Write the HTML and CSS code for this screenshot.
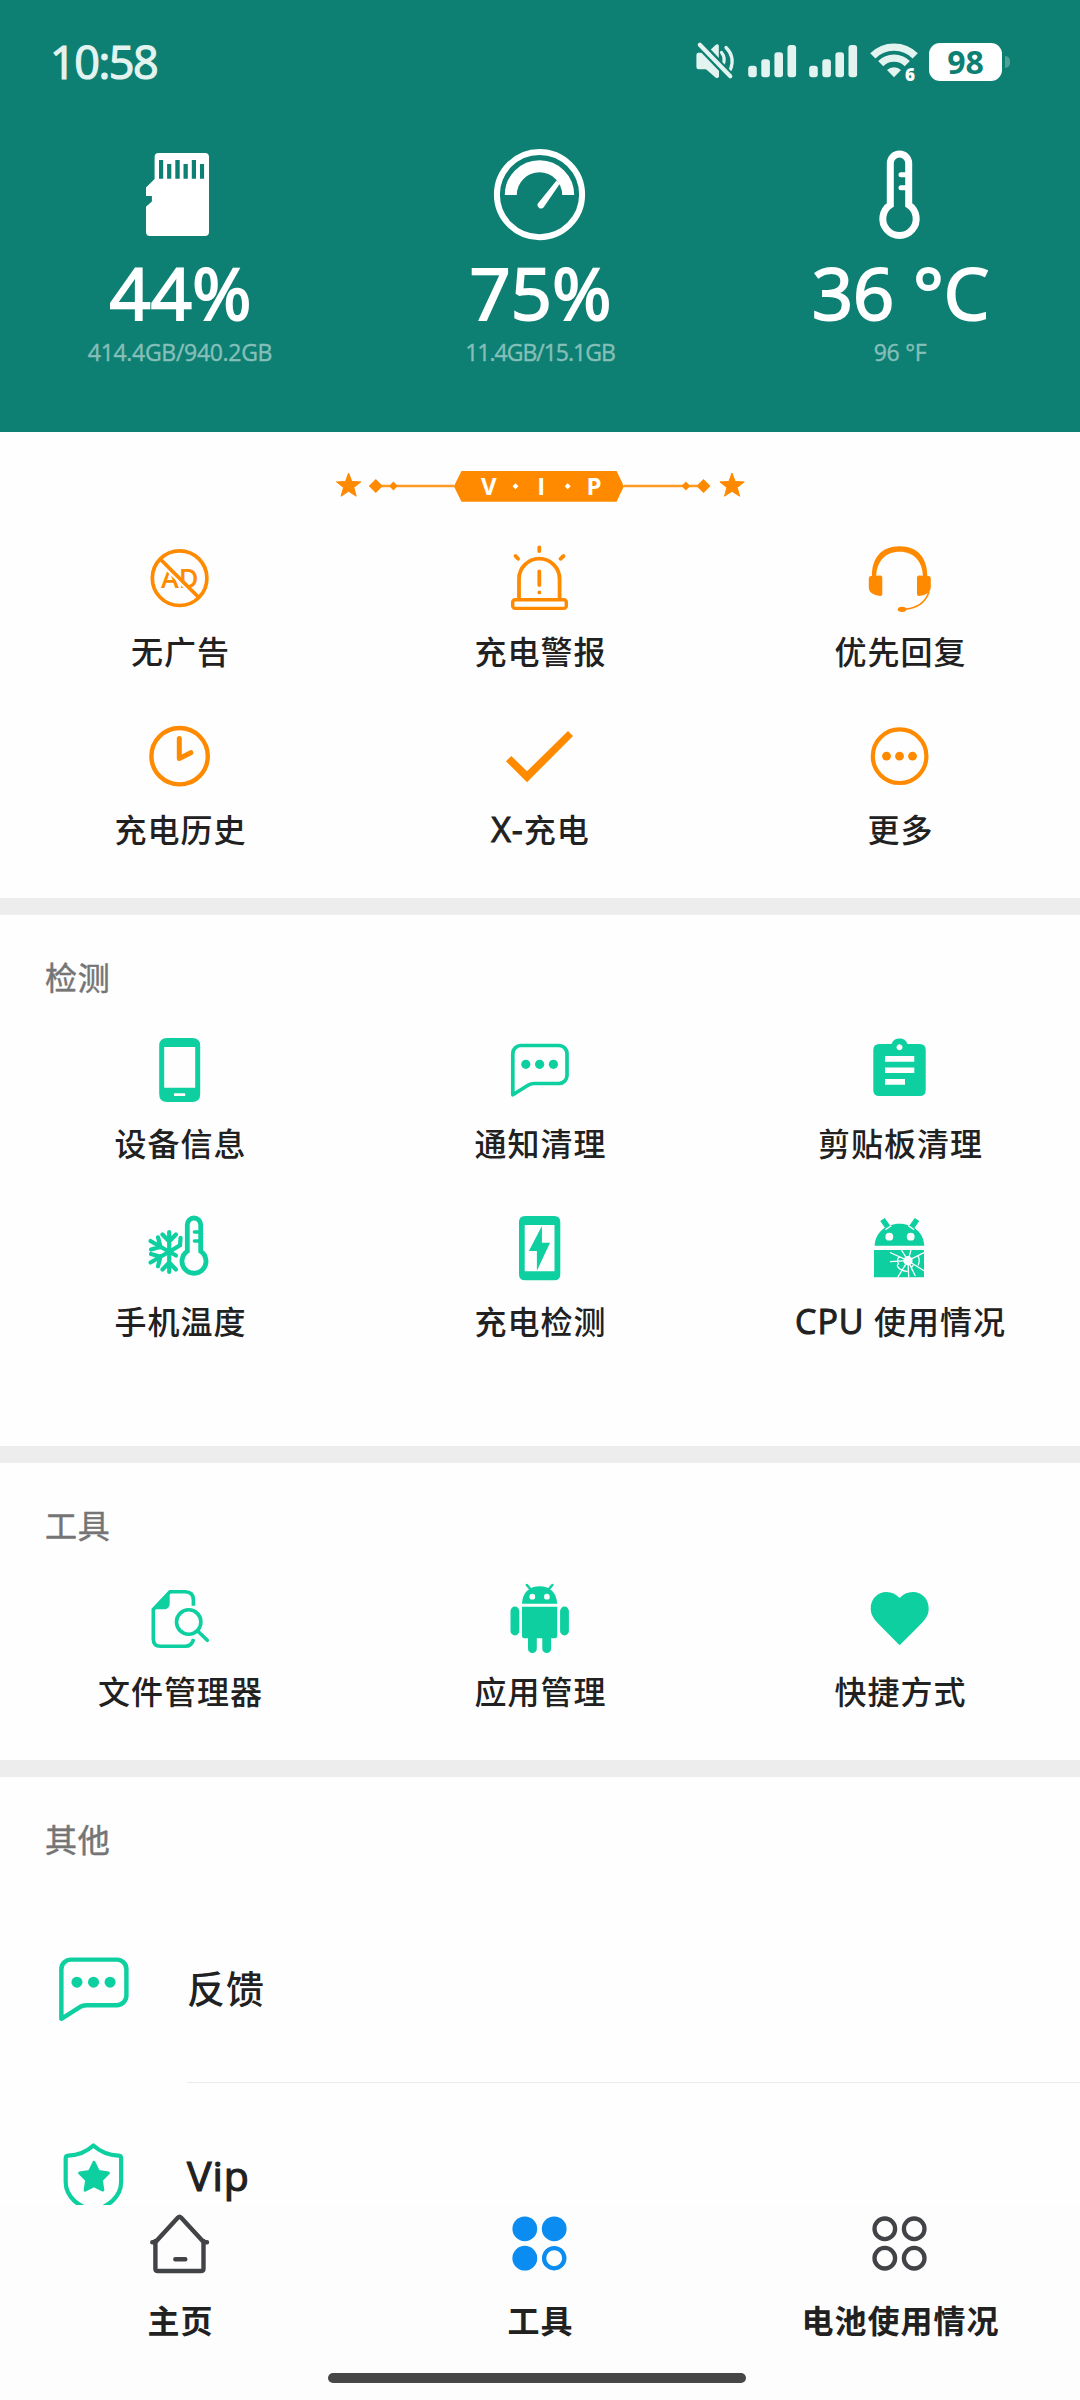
FILE: index.html
```html
<!DOCTYPE html>
<html lang="zh-CN">
<head>
<meta charset="utf-8">
<title>工具</title>
<link rel="stylesheet" href="styles.css">
</head>
<body>
<svg class="sprite" width="0" height="0">
  <symbol id="chat" viewBox="0 0 80 80">
    <path d="M12.800 64.800V23.500a8 8 0 0 1 8-8H59a8 8 0 0 1 8 8v22a8 8 0 0 1-8 8H34q-4 0-6.800 2.200z" fill="none" stroke="currentColor" stroke-width="3.700" stroke-linejoin="round"/>
    <circle cx="25.800" cy="34.300" r="4.600" fill="currentColor"/><circle cx="39.600" cy="34.300" r="4.600" fill="currentColor"/><circle cx="53.400" cy="34.300" r="4.600" fill="currentColor"/>
  </symbol>
  <symbol id="signal" viewBox="0 0 49 40">
    <rect x=".2" y="23.700" width="8.600" height="11.600" rx="3"/><rect x="13.300" y="17.300" width="8.600" height="18" rx="3"/><rect x="26.400" y="10.300" width="8.600" height="25" rx="3"/><rect x="39.500" y="3" width="8.600" height="32.300" rx="3"/>
  </symbol>
</svg>

<main class="content">
  <header class="header">
    <div class="status">
      <span class="time">10:58</span>
      <div class="status-icons">
        <svg width="40" height="40" viewBox="0 0 40 40" class="mute">
          <path d="M2.500 10.700H8L23 26v8.500q-1 2.500-3.500 1L10 27.300H2.500Q.4 27.300.4 25V13q0-2.300 2.100-2.300zM14.800 7.600l5-4.800q2.200-1.200 3 .7v12.400z"/>
          <path d="M25.500 10.500q4.500 5.500 1.500 12M30 5.500q9.500 9.500 4.500 22" fill="none" stroke="currentColor" stroke-width="3.200" stroke-linecap="round"/>
          <path d="M3.500 2.500L34.300 34.500" class="mute-gap"/>
          <path d="M3.800 2.700L34.300 34.300" fill="none" stroke="currentColor" stroke-width="4.200" stroke-linecap="round"/>
        </svg>
        <svg width="49" height="40"><use href="#signal"/></svg>
        <svg width="49" height="40"><use href="#signal"/></svg>
        <svg width="49" height="40" viewBox="0 0 49 40" class="wifi">
          <path d="M2.800 13.800a30 30 0 0 1 42.400 0M10.700 21.700a18.800 18.800 0 0 1 26.600 0" fill="none" stroke="currentColor" stroke-width="7.300"/>
          <path d="M24 35.300l-7-7.300a10 10 0 0 1 14 0z"/>
          <text x="35" y="38.700" class="wifi-gen">6</text>
        </svg>
        <div class="battery"><span class="battery-level">98</span></div>
        <i class="battery-nub"></i>
      </div>
    </div>
    <div class="stats">
      <div class="stat">
        <svg width="100" height="100" viewBox="0 0 100 100">
          <path fill-rule="evenodd" d="M28.600 8H75q4 0 4 4v75q0 4-4 4H20q-4 0-4-4V61.700L21.900 56.500V51H16V42.500L24.600 34V12q0-4 4-4zM29 15v18.700h4.200V15zM37.100 19v14.700h4.200V19zM45.300 15v18.700h4.400V15zM53.500 19v14.700h4.300V19zM61.800 15v18.700H66V15zM70 19v14.700h4.100V19z"/>
        </svg>
        <strong class="stat-value">44%</strong><span class="stat-detail">414.4GB/940.2GB</span>
      </div>
      <div class="stat">
        <svg width="100" height="100" viewBox="0 0 100 100">
          <circle cx="49.500" cy="49.600" r="42.600" fill="none" stroke="currentColor" stroke-width="6"/>
          <path d="M20.800 50a28.700 28.700 0 0 1 57.400 0" fill="none" stroke="currentColor" stroke-width="12"/>
          <path d="M66.500 35.500l3.500 3L53.500 62.500a3.600 3.600 0 0 1-6-3.500z"/>
        </svg>
        <strong class="stat-value">75%</strong><span class="stat-detail narrow">11.4GB/15.1GB</span>
      </div>
      <div class="stat">
        <svg width="100" height="100" viewBox="0 0 100 100">
          <path d="M40.300 59.800V18.300a9.200 9.200 0 0 1 18.400 0V59.800a16.700 16.700 0 1 1-18.400 0z" fill="none" stroke="currentColor" stroke-width="7"/>
          <path d="M59 29.700H51M59 42.700H51" fill="none" stroke="currentColor" stroke-width="5" stroke-linecap="round"/>
        </svg>
        <strong class="stat-value">36 °C</strong><span class="stat-detail">96 °F</span>
      </div>
    </div>
  </header>

  <section class="section vip">
    <svg class="ribbon" width="410" height="32" viewBox="0 0 410 32">
      <path d="M46 16H118M288 16H366" stroke-width="2.400" stroke="currentColor" opacity=".85"/>
      <path d="M12.600 3l3.200 8.500 9 .4-7 5.600 2.400 8.700-7.600-4.900-7.500 4.900 2.400-8.700-7-5.600 9-.4zM396 3l3.200 8.500 9 .4-7 5.600 2.400 8.700-7.600-4.900-7.500 4.900 2.400-8.700-7-5.600 9-.4z" stroke="currentColor"/>
      <path d="M39.800 9l7 7-7 7-7-7zM57.400 11.500l4.300 4.500-4.300 4.500-4.300-4.500zM367.500 9l7 7-7 7-7-7zM349.900 11.500l4.300 4.500-4.300 4.500-4.300-4.500z"/>
      <path d="M125.500 1H280.600L287.900 16.200 280.600 31.700H125.500L117.900 16.200z"/>
      <path class="ribbon-dot" d="M179.500 13.300l3 3-3 3-3-3zM231.700 13.300l3 3-3 3-3-3z"/>
      <text class="ribbon-text" y="25"><tspan x="152.700">V</tspan><tspan x="205.200">I</tspan><tspan x="258">P</tspan></text>
    </svg>
    <div class="grid">
      <div class="item">
        <svg class="icon" viewBox="0 0 80 80">
          <text class="ad-text" x="21" y="50.200" textLength="37.500" lengthAdjust="spacingAndGlyphs">AD</text>
          <path d="M20.500 25L55.500 60" stroke="#fefefe" stroke-width="3"/>
          <circle cx="39.600" cy="40.200" r="27.300" fill="none" stroke="currentColor" stroke-width="3.700"/>
          <path d="M20.400 21.300L58.600 59.300" stroke="currentColor" stroke-width="3.700"/>
        </svg>
        <span class="label">无广告</span>
      </div>
      <div class="item">
        <svg class="icon" viewBox="0 0 80 80" fill="none" stroke="currentColor" stroke-width="3.800" stroke-linecap="round">
          <path d="M19 60V41a20.300 20.300 0 0 1 40.600 0V60" stroke-linecap="butt"/>
          <rect x="12.700" y="61.700" width="53.600" height="8.700" rx="2.500" stroke-width="3.400"/>
          <path d="M39.300 33.300V47M39.300 54.300v.1M39.300 9.300V13M15.500 18l2.600 2.800M63.500 18l-3 2.800"/>
        </svg>
        <span class="label">充电警报</span>
      </div>
      <div class="item">
        <svg class="icon" viewBox="0 0 80 80">
          <path d="M11.900 38C12 20 21 8.200 39.600 8.200S67.200 20 67.300 38h-4.400C62.500 23.500 54 13.700 39.600 13.700S16.700 23.500 16.300 38z"/>
          <path d="M11 38l9-.4q2.300-.2 2.300 2V56q0 2.200-2.300 2-11-1.500-11.200-8V41q0-3 2.200-3zM68.500 38l-9.200-.4q-2.300-.2-2.300 2V56q0 2.200 2.300 2 11-1.500 11.500-8V41q0-3-2.300-3z"/>
          <path d="M69 54C65.500 64 57 70.500 44 71.300" fill="none" stroke="currentColor" stroke-width="1.600"/>
          <ellipse cx="42.100" cy="71.300" rx="4.300" ry="2.600"/>
        </svg>
        <span class="label">优先回复</span>
      </div>
      <div class="item">
        <svg class="icon" viewBox="0 0 80 80" fill="none" stroke="currentColor">
          <circle cx="39.600" cy="40.200" r="28.200" stroke-width="4.400"/>
          <path d="M39.300 22.500V42.500L50.800 36.700" stroke-width="5" stroke-linecap="round" stroke-linejoin="round"/>
        </svg>
        <span class="label">充电历史</span>
      </div>
      <div class="item">
        <svg class="icon" viewBox="0 0 80 80"><path d="M68 15l5 5L27 66.300 6 45.300 11.300 40 27 55.300z"/></svg>
        <span class="label"><span class="latin">X-</span>充电</span>
      </div>
      <div class="item">
        <svg class="icon" viewBox="0 0 80 80">
          <circle cx="39.600" cy="40.200" r="26.800" fill="none" stroke="currentColor" stroke-width="4.200"/>
          <circle cx="26.500" cy="40.200" r="4.400"/><circle cx="39.500" cy="40.200" r="4.400"/><circle cx="52.500" cy="40.200" r="4.400"/>
        </svg>
        <span class="label">更多</span>
      </div>
    </div>
  </section>

  <section class="section detect">
    <h2 class="heading">检测</h2>
    <div class="grid">
      <div class="item">
        <svg class="icon" viewBox="0 0 80 80"><path fill-rule="evenodd" d="M27.200 8h25q8 0 8 8v48q0 8-8 8h-25q-8 0-8-8V16q0-8 8-8zM24.200 17v40.700h31V17zM34 63.200V66h11.200v-2.800z"/></svg>
        <span class="label">设备信息</span>
      </div>
      <div class="item">
        <svg class="icon"><use href="#chat"/></svg>
        <span class="label">通知清理</span>
      </div>
      <div class="item">
        <svg class="icon" viewBox="0 0 80 80"><path fill-rule="evenodd" d="M19.300 14H31.500a8.600 8.600 0 0 1 16 0H59.700q6 0 6 6V60q0 6-6 6H19.300q-6 0-6-6V20q0-6 6-6zM39.500 14.300a3 3 0 1 0 .01 0zM25 26v5.700h29.300V26zM25 37.400v5.700h29.300v-5.700zM25 49v5.700h20V49z"/></svg>
        <span class="label">剪贴板清理</span>
      </div>
      <div class="item">
        <svg class="icon" viewBox="0 0 80 80" fill="none" stroke="currentColor" stroke-width="4.200" stroke-linecap="round">
          <path d="M47.300 43.300V16.700a6.700 6.700 0 0 1 13.400 0V43.300a12 12 0 1 1-13.400 0z" stroke-width="4.800"/>
          <path d="M60 24H54.500M60 33H54.500" stroke-width="3.600"/>
          <path d="M29.200 24V64M22.500 26.500l6.700 7 6.700-7M22.500 61.500l6.700-7 6.700 7"/>
          <path d="M29.200 43.700L10.500 33M11 41.500l9.500-2.700-2.500-9.500M29.200 43.700L10.500 54.500M11 46l9.500 2.700-2.500 9.500M29.200 43.700L40 37.300l.6-7.500M29.200 43.700L36 47.500"/>
        </svg>
        <span class="label">手机温度</span>
      </div>
      <div class="item">
        <svg class="icon" viewBox="0 0 80 80"><path fill-rule="evenodd" d="M25 8h29.300q6 0 6 6V66.300q0 6-6 6H25q-6 0-6-6V14q0-6 6-6zM24.700 17v46.300h29.800V17z"/><path d="M41.900 18V34.700H50L36.900 62.700V43h-8z"/></svg>
        <span class="label">充电检测</span>
      </div>
      <div class="item">
        <svg class="icon" viewBox="0 0 80 80">
          <path d="M14.700 37.700C15 25 25.500 15.700 39.500 15.700S64 25 64.300 37.700zM14 42H64V69.300H14z"/>
          <path d="M22.500 11.500L28 19.300M57 11.500L51.500 19.300" stroke="currentColor" stroke-width="5.500"/>
          <g fill="none" stroke="#fefefe" stroke-width="1.300">
            <path d="M25.300 21.800l6-4.200M54.200 21.800l-6-4.200"/>
            <path d="M48 52.700L30 44.500M48 52.700L41.500 42M48 52.700L51 42M48 52.700L64 44.700M48 52.700L64 62.700M48 52.700L55.300 68M48 52.700L48.700 69.300M48 52.700L37.700 69.300M48 52.700L30 53.700M39 48.500q-2.500 4 -.5 7.500-2 1 -.5 3 3 4 9.500 4.500M58 48q2.500 4 0 9.500M52 62q-1.500-3 1.500-5"/>
          </g>
          <g fill="#fefefe"><circle cx="29.300" cy="28.700" r="3.900"/><circle cx="50.700" cy="28.700" r="3.900"/><circle cx="48" cy="52.700" r="4.600"/></g>
        </svg>
        <span class="label"><span class="latin">CPU</span> 使用情况</span>
      </div>
    </div>
  </section>

  <section class="section tools">
    <h2 class="heading">工具</h2>
    <div class="grid">
      <div class="item">
        <svg class="icon" viewBox="0 0 80 80">
          <g fill="none" stroke="currentColor" stroke-width="3.600">
            <path d="M53.400 27.700V22q0-8.300-8.300-8.300H30L13.300 31.500V61q0 7.300 7.300 7.300H45q7 0 8.600-7.300"/>
            <circle cx="48.700" cy="44" r="12.200"/>
            <path d="M57.700 53L67.300 62.300" stroke-linecap="round"/>
          </g>
          <path d="M29.700 12.500V25.500q0 5.800-6 5.800H12z"/>
        </svg>
        <span class="label">文件管理器</span>
      </div>
      <div class="item">
        <svg class="icon" viewBox="0 0 80 80">
          <path d="M22 25.700C22.500 14 30 8.200 39.600 8.200S56.700 14 57.200 25.700zM22 28.700H57.200V58q0 2.300-2.300 2.300H24.300Q22 60.300 22 58z"/>
          <path d="M26.800 7l4 4.500M52.400 7l-4 4.500" stroke="currentColor" stroke-width="2.500" stroke-linecap="round"/>
          <path d="M14.900 33V53M64.500 33V53M32.400 58V70.700M46.700 58V70.700" stroke="currentColor" stroke-width="8.800" stroke-linecap="round"/>
          <circle cx="32.300" cy="18.700" r="2.900" fill="#fefefe"/><circle cx="46.900" cy="18.700" r="2.900" fill="#fefefe"/>
        </svg>
        <span class="label">应用管理</span>
      </div>
      <div class="item">
        <svg class="icon" viewBox="0 0 80 80"><path d="M39.600 67.200L26 53.500C16.500 43.500 10.700 39.500 10.700 30.500 10.700 21 17.500 14 26.500 14q7.800 0 13.100 6Q45 14 52.800 14C62 14 68.700 21 68.700 30.500 68.700 39.500 63 43.500 53.500 53.500z"/></svg>
        <span class="label">快捷方式</span>
      </div>
    </div>
  </section>

  <section class="section other">
    <h2 class="heading">其他</h2>
    <div class="list">
      <div class="row">
        <svg class="row-icon"><use href="#chat"/></svg>
        <span class="row-label">反馈</span>
      </div>
      <div class="row">
        <svg class="row-icon" viewBox="0 0 80 80">
          <path d="M39.500 13.800Q48 21.700 60.500 22.200 62.600 22.300 62.600 24.500V44C62.600 57 51 65.500 39.500 67.500 28 65.500 16.400 57 16.400 44V24.500Q16.400 22.300 18.500 22.200 31 21.700 39.500 13.800z" fill="none" stroke="currentColor" stroke-width="3.500" stroke-linejoin="round"/>
          <path d="M40 27.800l3.800 7.700 8.200 1.200-5.900 5.900 1.300 8.300L40 47.200l-7.400 3.700 1.300-8.300L28 36.700l8.200-1.200z" stroke="currentColor" stroke-width="2.500" stroke-linejoin="round"/>
        </svg>
        <span class="row-label row-latin">Vip</span>
      </div>
    </div>
  </section>
</main>

<nav class="nav">
  <div class="tabs">
    <div class="tab">
      <svg class="icon" viewBox="0 1 80 80" fill="none" stroke="currentColor" stroke-width="4.400" stroke-linecap="round" stroke-linejoin="round">
        <path d="M15.400 37V64.500q0 2.500 2.500 2.500H61q2.500 0 2.500-2.500V37"/>
        <path d="M12.300 38.300h3L38 13.500q1.500-1.500 3 0L63.800 38.300h3.200M35.300 55.200h10"/>
      </svg>
      <span class="tab-label">主页</span>
    </div>
    <div class="tab active">
      <svg class="icon" viewBox="0 1 80 80">
        <circle cx="24.800" cy="24.800" r="12.400"/><circle cx="54.200" cy="24.800" r="12.400"/><circle cx="24.800" cy="54.200" r="12.400"/>
        <circle cx="54.200" cy="54.200" r="10.100" fill="none" stroke="currentColor" stroke-width="4.300"/>
      </svg>
      <span class="tab-label">工具</span>
    </div>
    <div class="tab">
      <svg class="icon" viewBox="0 1 80 80" fill="none" stroke="currentColor" stroke-width="4.300">
        <circle cx="24.800" cy="24.800" r="10.300"/><circle cx="54.200" cy="24.800" r="10.300"/><circle cx="24.800" cy="54.200" r="10.300"/><circle cx="54.200" cy="54.200" r="10.300"/>
      </svg>
      <span class="tab-label">电池使用情况</span>
    </div>
  </div>
  <div class="home-indicator"></div>
</nav>
</body>
</html>
```
FILE: styles.css
```css
* { box-sizing: border-box; margin: 0; padding: 0; }

body {
  width: 1080px;
  height: 2400px;
  display: flex;
  flex-direction: column;
  overflow: hidden;
  background: #fefefe;
  color: #212121;
  font-family: "Open Sans", "Noto Sans CJK SC", sans-serif;
}

svg { display: block; flex: none; fill: currentColor; overflow: visible; }
svg[fill="none"] { fill: none; }
.sprite { position: absolute; }
.content { flex: 1; min-height: 0; overflow: hidden; }

/* Header */
.header { height: 432px; background: #0d8073; color: #fff; }
.status {
  height: 145px;
  padding: 34px 70px 55px 50px;
  display: flex;
  align-items: center;
  justify-content: space-between;
}
.time {
  font-size: 45px;
  line-height: 56px;
  letter-spacing: -1.5px;
  color: #e3f3f0;
  -webkit-text-stroke: 1.2px currentColor;
}
.status-icons { display: flex; align-items: center; color: #e3f3f0; }
.status-icons svg { margin-right: 12px; }
.status-icons .wifi { margin-right: 10px; }
.mute-gap { fill: none; stroke: #0d8073; stroke-width: 8.500; }
.wifi-gen { font: 800 17px "Open Sans", sans-serif; fill: #fff; }
.battery {
  width: 73px;
  height: 38px;
  border-radius: 11px;
  background: #fff;
  display: flex;
  align-items: center;
  justify-content: center;
}
.battery-level { font-size: 32px; line-height: 38px; font-weight: 700; color: #0d8073; }
.battery-nub { width: 5px; height: 12px; margin-left: 3px; border-radius: 0 5px 5px 0; background: #4fa197; }

.stats { display: grid; grid-template-columns: repeat(3, 1fr); }
.stat { display: flex; flex-direction: column; align-items: center; }
.stat-value {
  margin-top: 3px;
  padding-left: 1px;
  font-size: 72px;
  line-height: 88px;
  font-weight: 400;
  white-space: pre;
  -webkit-text-stroke: 2px currentColor;
}
.stat-detail {
  margin-top: 1px;
  font-size: 23px;
  line-height: 30px;
  letter-spacing: -.3px;
  color: #86bfb9;
  -webkit-text-stroke: .4px currentColor;
}
.narrow { letter-spacing: -1px; }

/* Sections */
.section { border-bottom: 17px solid #ededed; }
.vip { padding: 38px 0 48px; color: #ff8a00; }
.ribbon { margin: 0 auto 36px 336px; }
.ribbon-dot { fill: #fff; }
.ribbon-text { font: 700 24px "Open Sans", sans-serif; fill: #fff; text-anchor: middle; }
.ad-text { font: 600 27px "Open Sans", sans-serif; }
.heading {
  padding: 43px 0 0 45px;
  height: 83px;
  font-size: 32px;
  line-height: 40px;
  font-weight: 400;
  letter-spacing: .7px;
  color: #757575;
  -webkit-text-stroke: .5px currentColor;
}
.detect, .tools, .other { color: #0dcf9f; }
.detect { padding-bottom: 104px; }
.tools { padding-bottom: 48px; }
.detect .grid, .tools .grid { margin-top: 32px; }
.grid { display: grid; grid-template-columns: repeat(3, 1fr); row-gap: 44px; }
.item { display: flex; flex-direction: column; align-items: center; gap: 14px; }
.icon { width: 80px; height: 80px; }
.label, .tab-label {
  height: 40px;
  padding-left: 1px;
  font-size: 32px;
  line-height: 40px;
  font-weight: 500;
  letter-spacing: 1px;
  color: #212121;
  white-space: nowrap;
}
.latin { font-size: 34px; line-height: 1; font-weight: 400; -webkit-text-stroke: 1px currentColor; }

/* List */
.other { border: 0; }
.list { margin-top: 35px; }
.row { height: 188px; padding-left: 46px; display: flex; align-items: center; }
.row-icon { width: 96px; height: 96px; }
.row-label {
  flex: 1;
  height: 188px;
  margin-left: 45px;
  border-bottom: 1px solid #ececec;
  font-size: 38px;
  line-height: 187px;
  font-weight: 500;
  letter-spacing: 1px;
  color: #212121;
}
.row-latin { font-size: 41px; font-weight: 400; line-height: 185px; -webkit-text-stroke: 1.2px currentColor; }

/* Bottom navigation */
.nav { flex: none; height: 195px; background: #fdfdfd; color: #424346; }
.tabs { display: grid; grid-template-columns: repeat(3, 1fr); }
.tab { display: flex; flex-direction: column; align-items: center; gap: 16px; }
.active { color: #0a8cf0; }
.tab-label { font-weight: 700; }
.home-indicator { width: 418px; height: 10px; margin: 32px auto 0 328px; border-radius: 5px; background: #474747; }
```
